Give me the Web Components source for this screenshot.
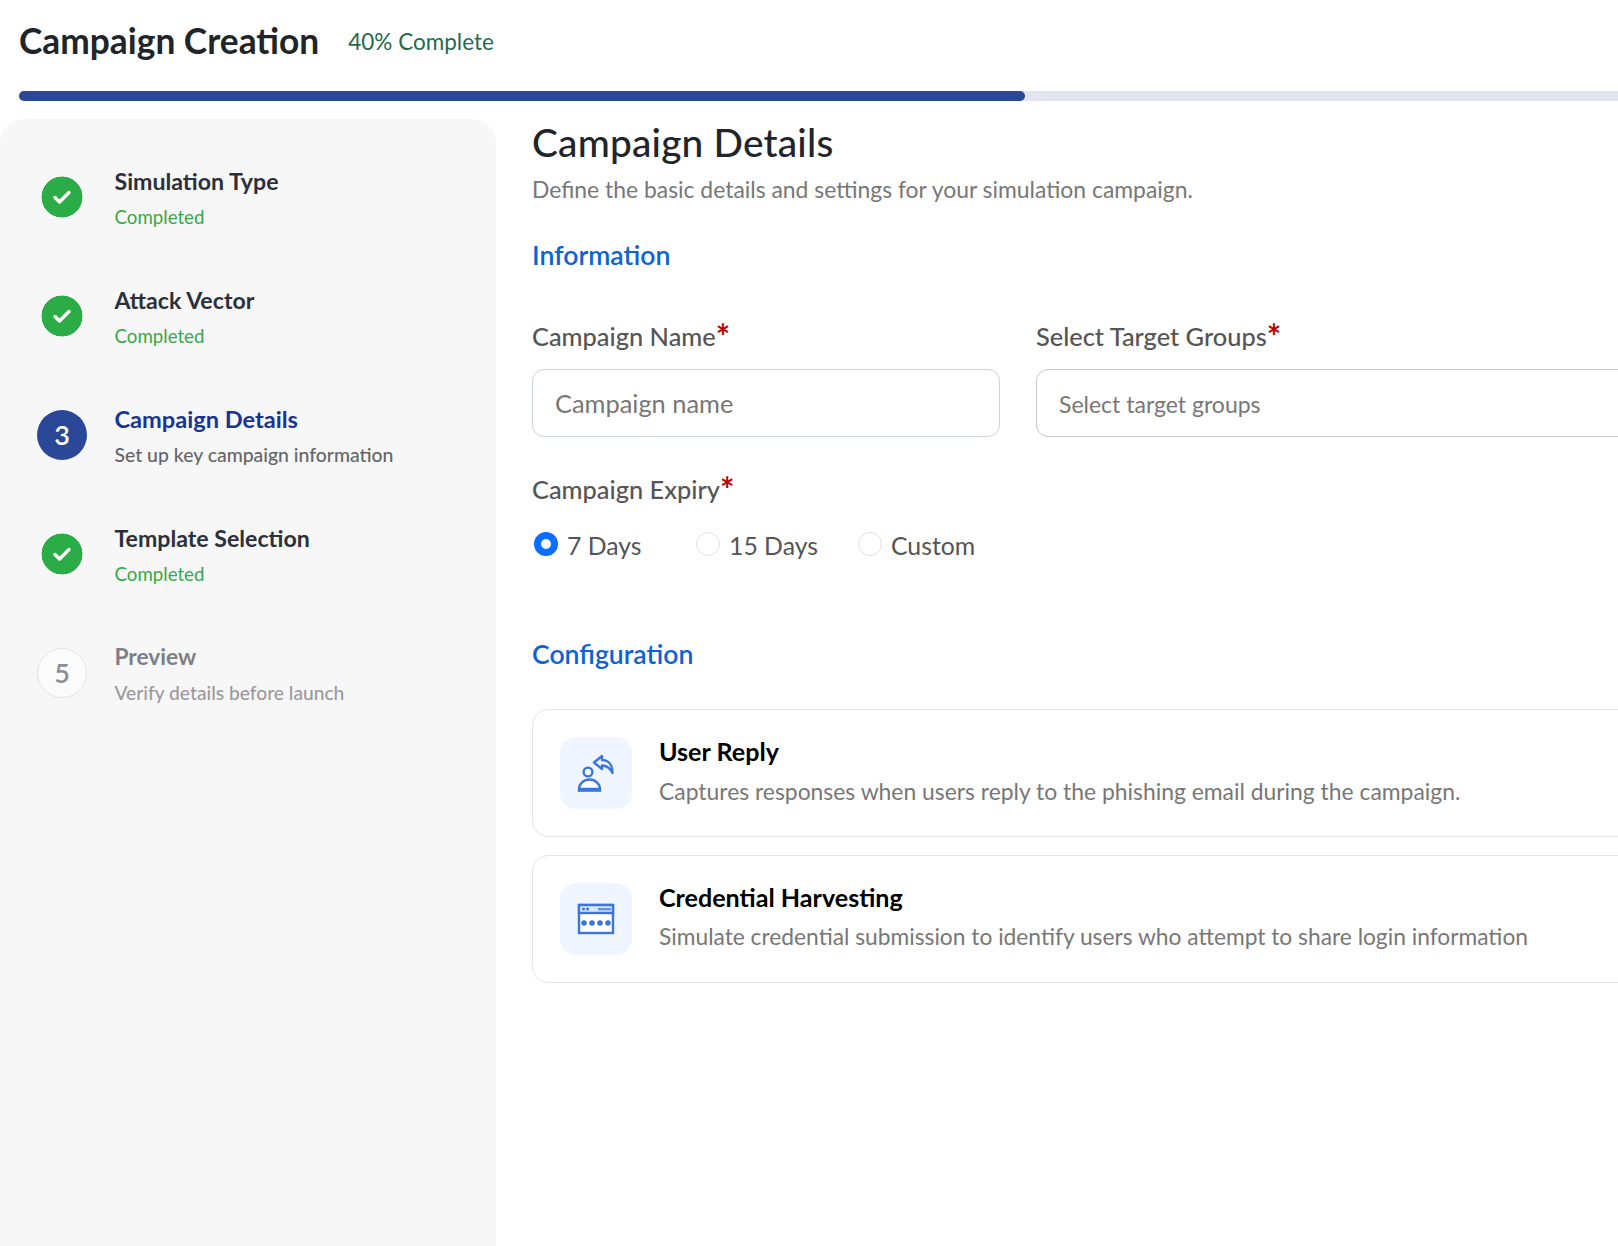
<!DOCTYPE html>
<html>
<head>
<meta charset="utf-8">
<style>
  html, body { margin: 0; padding: 0; background: #fff; overflow: hidden; }
  body { font-family: "Lato", "Open Sans", sans-serif; width: 1618px; height: 1246px; }
</style>
</head>
<body>
<campaign-page>
  <progress-header slot="header" title="Campaign Creation" status="40% Complete"></progress-header>
  <step-list slot="side">
    <step-item state="done" name="Simulation Type" note="Completed"></step-item>
    <step-item state="done" name="Attack Vector" note="Completed"></step-item>
    <step-item state="active" num="3" name="Campaign Details" note="Set up key campaign information"></step-item>
    <step-item state="done" name="Template Selection" note="Completed"></step-item>
    <step-item state="todo" num="5" name="Preview" note="Verify details before launch"></step-item>
  </step-list>
  <details-form slot="main">
    <form-field slot="name" label="Campaign Name" placeholder="Campaign name" size="25.400px"></form-field>
    <form-field slot="groups" label="Select Target Groups" placeholder="Select target groups" size="23px"></form-field>
    <radio-option slot="expiry" checked>7 Days</radio-option>
    <radio-option slot="expiry">15 Days</radio-option>
    <radio-option slot="expiry">Custom</radio-option>
    <config-card slot="config" name="User Reply" size="22.880px" text="Captures responses when users reply to the phishing email during the campaign.">
      <svg slot="icon" width="72" height="72" viewBox="0 0 72 72" fill="none" stroke="#3b76dc" stroke-width="2.400">
        <circle cx="28" cy="35" r="4.400"/>
        <path d="M19 53.500v-1.500a10.500 9.500 0 0 1 21 0v1.500z" fill="#fff"/>
        <path d="M18.500 52.500h22" stroke-width="3.500"/>
        <path d="M42 19l-8 6.500 8 6.500v-3.500c4.500 0 8 2.500 10.500 7.500 0-8-4-13-10.500-13z" stroke-linejoin="round"/>
      </svg>
    </config-card>
    <config-card slot="config" name="Credential Harvesting" size="22.780px" text="Simulate credential submission to identify users who attempt to share login information">
      <svg slot="icon" width="72" height="72" viewBox="0 0 72 72" fill="none">
        <rect x="19" y="22" width="34" height="28" fill="#fff" stroke="#3b76dc" stroke-width="2.400"/>
        <rect x="19" y="22" width="34" height="8" fill="#dbe7fb" stroke="#3b76dc" stroke-width="2.400"/>
        <g fill="#3b76dc">
          <circle cx="23.500" cy="26" r="1.500"/><circle cx="27.500" cy="26" r="1.500"/>
          <rect x="38" y="25" width="13" height="2.400" opacity=".75"/>
          <circle cx="24" cy="40" r="2.800"/>
          <circle cx="32" cy="40" r="2.800"/>
          <circle cx="40" cy="40" r="2.800"/>
          <circle cx="48" cy="40" r="2.800"/>
        </g>
      </svg>
    </config-card>
  </details-form>
</campaign-page>

<script>
 function tpl(html) {
     const t = document.createElement('template');
     t.innerHTML = html;
     return t;
 }

 const pageTpl = tpl(`
  <style>
   :host { display: block; width: 1618px; height: 1246px; overflow: hidden; }
   .body { display: flex; gap: 36px; margin-top: 18px; height: 1127px; }
   .side { flex: 0 0 496px; box-sizing: border-box; background: #f7f7f7; border-radius: 24px 24px 0 0; padding-top: 51px; }
   .main { flex: 1; min-width: 0; }
  </style>
  <slot name="header"></slot>
  <div class="body">
   <div class="side"><slot name="side"></slot></div>
   <div class="main"><slot name="main"></slot></div>
  </div>`);
 customElements.define('campaign-page', class extends HTMLElement {
     constructor() {
         super();
         this.attachShadow({ mode: 'open' }).appendChild(pageTpl.content.cloneNode(true));
     }
 });

 const headerTpl = tpl(`
  <style>
   :host { display: block; padding: 20px 0 0 19px; }
   .row { display: flex; align-items: center; gap: 29px; height: 42px; }
   h1 { margin: 0; font-size: 35.300px; font-weight: 700; color: #212529; line-height: 42px; }
   span { font-size: 22.500px; color: #1f6b4e; }
   .track { margin-top: 29px; height: 10px; width: 1800px; background: #e2e5ee; border-radius: 5px; }
   .fill { height: 100%; width: 1006px; background: #2a4798; border-radius: 5px; }
  </style>
  <div class="row"><h1></h1><span></span></div>
  <div class="track"><div class="fill"></div></div>`);
 customElements.define('progress-header', class extends HTMLElement {
     constructor() {
         super();
         this.attachShadow({ mode: 'open' }).appendChild(headerTpl.content.cloneNode(true));
     }
     connectedCallback() {
         this.shadowRoot.querySelector('h1').textContent = this.getAttribute('title');
         this.shadowRoot.querySelector('span').textContent = this.getAttribute('status');
     }
 });

 const listTpl = tpl(`
  <style>:host { display: flex; flex-direction: column; }</style>
  <slot></slot>`);
 customElements.define('step-list', class extends HTMLElement {
     constructor() {
         super();
         this.attachShadow({ mode: 'open' }).appendChild(listTpl.content.cloneNode(true));
     }
 });

 const stepTpl = tpl(`
  <style>
   :host { display: flex; height: 119px; box-sizing: border-box; color: #2b303b; }
   .dot { flex: 0 0 50px; height: 50px; margin: 1.500px 27.500px 0 37px; border-radius: 50%; display: flex; align-items: center; justify-content: center; font-size: 27px; font-weight: 600; box-sizing: border-box; }
   :host([state="done"]) .dot { background: radial-gradient(circle, #2bac47 20.200px, transparent 20.700px); }
   :host([state="active"]) .dot { background: #2a4798; color: #fff; }
   :host([state="todo"]) .dot { border: 1px solid #e3e3e8; background: #fbfbfb; color: #8d8f96; }
   .name { font-size: 23.150px; font-weight: 700; line-height: 28px; margin-top: -3px; }
   .note { font-size: 19.400px; line-height: 24px; margin-top: 10px; font-weight: 500; color: #646569; }
   :host([state="done"]) .note { color: #38a847; font-weight: 400; font-size: 18.700px; }
   :host([state="active"]) .name { color: #173595; font-size: 23.600px; }
   :host([state="todo"]) .name { color: #7e8087; font-size: 22.700px; }
   :host([state="todo"]) .note { color: #9a9a9e; font-size: 19.200px; }
  </style>
  <div class="dot"></div>
  <div><div class="name"></div><div class="note"></div></div>`);
 customElements.define('step-item', class extends HTMLElement {
     constructor() {
         super();
         this.attachShadow({ mode: 'open' }).appendChild(stepTpl.content.cloneNode(true));
     }
     connectedCallback() {
         const root = this.shadowRoot;
         root.querySelector('.name').textContent = this.getAttribute('name');
         root.querySelector('.note').textContent = this.getAttribute('note');
         const dot = root.querySelector('.dot');
         if (this.getAttribute('state') === 'done') {
             dot.innerHTML = '<svg width="20" height="18" viewBox="0 0 20 18" fill="none" stroke="#fff" stroke-width="3.400" stroke-linecap="round" stroke-linejoin="round"><path d="M3 9.500l4.500 4.500 9.500-9.500"/></svg>';
         } else {
             dot.textContent = this.getAttribute('num');
         }
     }
 });

 const formTpl = tpl(`
  <style>
   :host { display: block; }
   h2 { margin: 0; font-size: 38.800px; font-weight: 500; color: #212529; line-height: 46px; letter-spacing: .2px; }
   p { margin: 10px 0 0; font-size: 22.900px; line-height: 28px; color: #777; }
   h3 { margin: 0; font-size: 26.600px; font-weight: 600; color: #0f62d4; line-height: 32px; }
   .info { margin-top: 36px; }
   .row { display: flex; gap: 36px; margin-top: 50px; width: 1300px; }
   .lab { margin-top: 37px; font-size: 25.400px; font-weight: 500; color: #555; line-height: 30px; }
   i { font-style: normal; font-weight: 700; color: #c00000; font-size: 34px; line-height: 0; vertical-align: -3px; }
   .radios { display: flex; margin-top: 24px; height: 32px; padding-left: 2px; }
   .conf { margin-top: 78px; }
   .cards { margin-top: 39px; display: flex; flex-direction: column; gap: 18px; width: 1300px; }
  </style>
  <h2>Campaign Details</h2>
  <p>Define the basic details and settings for your simulation campaign.</p>
  <h3 class="info">Information</h3>
  <div class="row"><slot name="name"></slot><slot name="groups"></slot></div>
  <div class="lab">Campaign Expiry<i>*</i></div>
  <div class="radios"><slot name="expiry"></slot></div>
  <h3 class="conf">Configuration</h3>
  <div class="cards"><slot name="config"></slot></div>`);
 customElements.define('details-form', class extends HTMLElement {
     constructor() {
         super();
         this.attachShadow({ mode: 'open' }).appendChild(formTpl.content.cloneNode(true));
     }
 });

 const fieldTpl = tpl(`
  <style>
   :host { display: block; flex: 0 0 468px; }
   :host([slot="groups"]) { flex: 1; }
   label { display: block; font-size: 25.400px; font-weight: 500; color: #555; line-height: 30px; }
   i { font-style: normal; font-weight: 700; color: #c00000; font-size: 34px; line-height: 0; vertical-align: -3px; }
   .box { margin-top: 18px; height: 68px; box-sizing: border-box; border: 1px solid #ced2dc; border-radius: 12px; padding-left: 22px; display: flex; align-items: center; color: #777; }
   :host([slot="groups"]) .box { border-color: #c8c8c8; padding-top: 1px; }
  </style>
  <label></label>
  <div class="box"></div>`);
 customElements.define('form-field', class extends HTMLElement {
     constructor() {
         super();
         this.attachShadow({ mode: 'open' }).appendChild(fieldTpl.content.cloneNode(true));
     }
     connectedCallback() {
         const root = this.shadowRoot;
         root.querySelector('label').innerHTML = this.getAttribute('label') + '<i>*</i>';
         const box = root.querySelector('.box');
         box.textContent = this.getAttribute('placeholder');
         box.style.fontSize = this.getAttribute('size');
     }
 });

 const radioTpl = tpl(`
  <style>
   :host { display: flex; flex: 0 0 162px; align-items: center; gap: 9px; font-size: 24.800px; color: #555; }
   b { width: 24px; height: 24px; box-sizing: border-box; border-radius: 50%; border: 1px solid #dfe1e6; background: #fff; }
   :host([checked]) b { border: 7px solid #0d6efd; }
   span { padding-top: 2px; }
  </style>
  <b></b><span><slot></slot></span>`);
 customElements.define('radio-option', class extends HTMLElement {
     constructor() {
         super();
         this.attachShadow({ mode: 'open' }).appendChild(radioTpl.content.cloneNode(true));
     }
 });

 const cardTpl = tpl(`
  <style>
   :host { display: flex; height: 128px; box-sizing: border-box; border: 1px solid #e4e6ef; border-radius: 16px; padding: 27px; gap: 27px; }
   .tile { flex: 0 0 72px; height: 72px; background: #eff6ff; border-radius: 16px; }
   .name { font-size: 25.100px; font-weight: 700; color: #000; line-height: 30px; margin-top: -1px; }
   .text { color: #777; line-height: 28px; margin-top: 11px; }
  </style>
  <div class="tile"><slot name="icon"></slot></div>
  <div><div class="name"></div><div class="text"></div></div>`);
 customElements.define('config-card', class extends HTMLElement {
     constructor() {
         super();
         this.attachShadow({ mode: 'open' }).appendChild(cardTpl.content.cloneNode(true));
     }
     connectedCallback() {
         this.shadowRoot.querySelector('.name').textContent = this.getAttribute('name');
         const text = this.shadowRoot.querySelector('.text');
         text.textContent = this.getAttribute('text');
         text.style.fontSize = this.getAttribute('size');
     }
 });
</script>
</body>
</html>
